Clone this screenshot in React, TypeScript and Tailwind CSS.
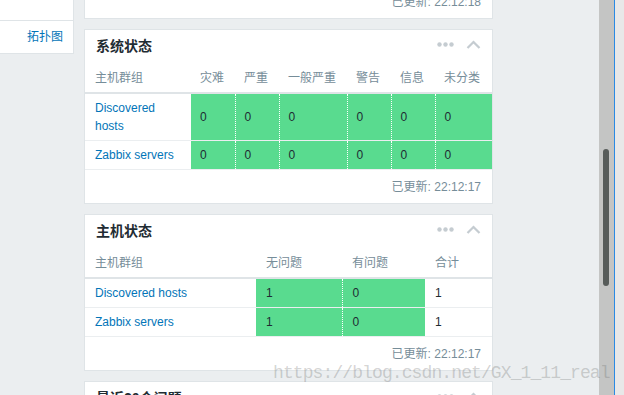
const font = "font-['Liberation_Sans','Noto_Sans_CJK_SC',sans-serif]";

const Dots = () => (
  <svg width="17" height="5" viewBox="0 0 17 5">
    <circle cx="2.5" cy="2.5" r="2.2" fill="#c5ccd1" />
    <circle cx="8.5" cy="2.5" r="2.2" fill="#c5ccd1" />
    <circle cx="14.5" cy="2.5" r="2.2" fill="#c5ccd1" />
  </svg>
);

const Chevron = () => (
  <svg width="15" height="9" viewBox="0 0 15 9">
    <polyline points="1.5,8 7.5,2 13.5,8" fill="none" stroke="#c5ccd1" strokeWidth="2.2" />
  </svg>
);

const CardHeader = ({ title }: { title: string }) => (
  <div className="flex h-[33px] items-center justify-between pl-[11px] pr-[11px]">
    <h4 className="text-[14px] font-bold text-[#1f2c33]">{title}</h4>
    <div className="-mt-[5px] flex items-center gap-[12px]">
      <Dots />
      <Chevron />
    </div>
  </div>
);

const Footer = ({ time }: { time: string }) => (
  <div className="flex h-[33px] items-center justify-end pr-[11px] text-[12px] text-[#768d99]">
    已更新: {time}
  </div>
);

const green = "bg-[#59db8f] text-[#1f2c33]";
const dotted = "border-l border-dotted border-l-white";

const severity = [
  { name: "Discovered hosts", values: [0, 0, 0, 0, 0, 0] },
  { name: "Zabbix servers", values: [0, 0, 0, 0, 0, 0] },
];

const hosts = [
  { name: "Discovered hosts", ok: 1, bad: 0, total: 1 },
  { name: "Zabbix servers", ok: 1, bad: 0, total: 1 },
];

export default function App() {
  return (
    <div className={`relative flex h-[395px] w-[624px] overflow-hidden bg-[#ebeef0] ${font}`}>
      {/* left menu */}
      <div className="w-[74px] flex-none">
        <div className="border-r border-b border-[#dfe4e7] bg-white">
          <div className="h-[21px] border-b border-[#dfe4e7]"></div>
          <div className="flex h-[32px] items-center justify-end pr-[10px] text-[12px] text-[#0275b8]">
            拓扑图
          </div>
        </div>
      </div>

      {/* widgets */}
      <div className="ml-[10px] flex w-[409px] flex-none flex-col gap-[10px] -mt-[16px]">
        <div className="border border-[#dfe4e7] bg-white">
          <Footer time="22:12:18" />
        </div>

        <div className="border border-[#dfe4e7] bg-white">
          <CardHeader title="系统状态" />
          <table className="w-full table-fixed border-collapse text-[12px]">
            <colgroup>
              <col className="w-[106px]" />
              <col className="w-[44px]" />
              <col className="w-[44px]" />
              <col className="w-[68px]" />
              <col className="w-[44px]" />
              <col className="w-[44px]" />
              <col />
            </colgroup>
            <thead>
              <tr className="h-[30px] border-b-2 border-[#dfe4e7] text-left text-[#768d99]">
                <th className="pl-[10px] font-normal">主机群组</th>
                <th className="pl-[9px] font-normal">灾难</th>
                <th className="pl-[9px] font-normal">严重</th>
                <th className="pl-[9px] font-normal">一般严重</th>
                <th className="pl-[9px] font-normal">警告</th>
                <th className="pl-[9px] font-normal">信息</th>
                <th className="pl-[9px] font-normal">未分类</th>
              </tr>
            </thead>
            <tbody>
              {severity.map((row) => (
                <tr key={row.name} className="border-b border-[#ebeef0] leading-[18px]">
                  <td className="py-[5px] pl-[10px] pr-[14px] text-[#0275b8]">{row.name}</td>
                  {row.values.map((v, i) => (
                    <td key={i} className={`py-[5px] pl-[9px] ${green} ${i > 0 ? dotted : ""}`}>
                      {v}
                    </td>
                  ))}
                </tr>
              ))}
            </tbody>
          </table>
          <Footer time="22:12:17" />
        </div>

        <div className="border border-[#dfe4e7] bg-white">
          <CardHeader title="主机状态" />
          <table className="w-full table-fixed border-collapse text-[12px]">
            <colgroup>
              <col className="w-[171px]" />
              <col className="w-[86px]" />
              <col className="w-[83px]" />
              <col />
            </colgroup>
            <thead>
              <tr className="h-[30px] border-b-2 border-[#dfe4e7] text-left text-[#768d99]">
                <th className="pl-[10px] font-normal">主机群组</th>
                <th className="pl-[10px] font-normal">无问题</th>
                <th className="pl-[10px] font-normal">有问题</th>
                <th className="pl-[10px] font-normal">合计</th>
              </tr>
            </thead>
            <tbody>
              {hosts.map((row) => (
                <tr key={row.name} className="border-b border-[#ebeef0] leading-[18px]">
                  <td className="py-[5px] pl-[10px] text-[#0275b8]">{row.name}</td>
                  <td className={`py-[5px] pl-[10px] ${green}`}>{row.ok}</td>
                  <td className={`py-[5px] pl-[10px] ${green} ${dotted}`}>{row.bad}</td>
                  <td className="py-[5px] pl-[10px] text-[#1f2c33]">{row.total}</td>
                </tr>
              ))}
            </tbody>
          </table>
          <Footer time="22:12:17" />
        </div>

        <div className="border border-[#dfe4e7] bg-white">
          <CardHeader title="最近20个问题" />
        </div>
      </div>

      <div className="flex-1"></div>

      {/* scrollbar */}
      <div className="w-[15px] flex-none bg-[#c4c5c4] pl-[4px] pt-[149px]">
        <div className="h-[137px] w-[6px] rounded-full bg-[#575c5a]"></div>
      </div>
      <div className="w-[1px] flex-none bg-[#2a8ae4]"></div>
      <div className="w-[9px] flex-none bg-[#e8e8e8]"></div>

      {/* watermark */}
      <div className="pointer-events-none absolute left-[273px] top-[364px] whitespace-nowrap font-['Liberation_Mono',monospace] text-[18px] leading-none tracking-[-0.9px] text-[rgba(110,110,110,0.3)]">
        https://blog.csdn.net/GX_1_11_real
      </div>
    </div>
  );
}
